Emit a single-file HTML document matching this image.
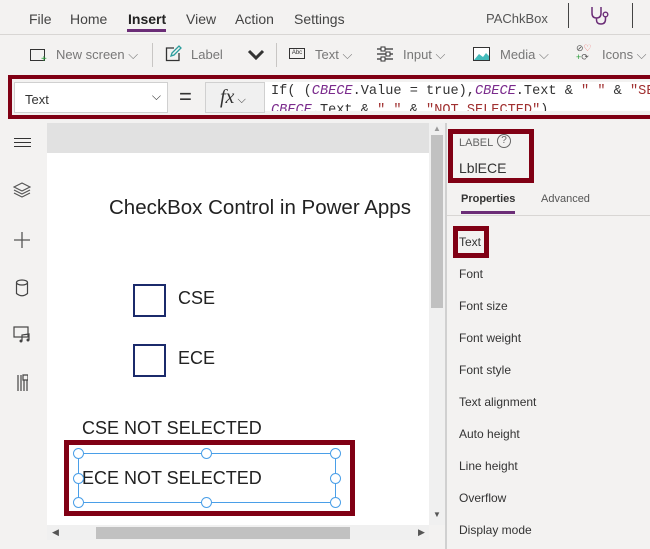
<!DOCTYPE html>
<html><head><meta charset="utf-8"><style>
*{margin:0;padding:0;box-sizing:border-box}
body{width:650px;height:549px;overflow:hidden;background:#f3f2f1;font-family:"Liberation Sans",sans-serif;position:relative;color:#333}
.a{position:absolute;white-space:nowrap}
.m{font-size:14px;color:#444;top:11px}
.t{font-size:13px;color:#777;top:47px}
.sep{position:absolute;width:1px;background:#c8c6c4}
.p{position:absolute;left:459px;font-size:12px;color:#333}
.cb{position:absolute;width:33px;height:33px;border:2px solid #1b2a6b;background:#fff}
.h{position:absolute;width:11px;height:11px;border:1.5px solid #4a9fe8;border-radius:50%;background:#fff}
svg{position:absolute}
</style></head><body>
<!-- menu -->
<div class="a m" style="left:29px">File</div>
<div class="a m" style="left:70px">Home</div>
<div class="a m" style="left:128px;font-weight:bold;color:#222">Insert</div>
<div style="position:absolute;left:127px;top:29px;width:39px;height:3px;background:#6b2d77"></div>
<div class="a m" style="left:186px">View</div>
<div class="a m" style="left:235px">Action</div>
<div class="a m" style="left:294px">Settings</div>
<div class="a m" style="left:486px;font-size:13px;color:#555">PAChkBox</div>
<div class="sep" style="left:568px;top:3px;height:25px;background:#444"></div>
<svg style="left:589px;top:6px" width="22" height="19" viewBox="0 0 22 19"><path d="M3 1 V7 Q3 12 7.5 12 Q12 12 12 7 V1 M7.5 12 V14 Q7.5 18 12 18 Q16.5 18 16.5 13 V11" fill="none" stroke="#6b2d77" stroke-width="1.5"/><circle cx="16.5" cy="8.5" r="2.3" fill="none" stroke="#6b2d77" stroke-width="1.4"/></svg>
<div class="sep" style="left:632px;top:3px;height:25px;background:#444"></div>
<div style="position:absolute;left:0;top:34px;width:650px;height:1px;background:#d8d6d4"></div>
<!-- toolbar -->
<div class="a" style="left:30px;top:49px;width:15px;height:12px;border:1.3px solid #333"></div>
<div class="a" style="left:41px;top:54px;font-size:10px;color:#2a9d3a">+</div>
<div class="a t" style="left:56px">New screen ⌵</div>
<div class="sep" style="left:152px;top:43px;height:24px"></div>
<svg style="left:165px;top:45px" width="17" height="17" viewBox="0 0 17 17"><path d="M9 3 H1.5 V15.5 H14 V8" fill="none" stroke="#333" stroke-width="1.3"/><path d="M6 11 L7 8 L14 1 L16 3 L9 10 Z" fill="none" stroke="#2a9d9d" stroke-width="1.3"/></svg>
<div class="a t" style="left:191px">Label</div>
<svg style="left:247px;top:49px" width="18" height="11" viewBox="0 0 18 11"><path d="M2 2 L9 9 L16 2" fill="none" stroke="#333" stroke-width="3"/></svg>
<div class="sep" style="left:276px;top:43px;height:24px"></div>
<div class="a" style="left:289px;top:48px;width:16px;height:11px;border:1px solid #333;font-size:6px;line-height:9px;text-align:center">Abc</div>
<div class="a t" style="left:315px">Text ⌵</div>
<svg style="left:376px;top:45px" width="18" height="17" viewBox="0 0 18 17"><path d="M1 4 H17 M1 9 H17 M1 14 H17" stroke="#333" stroke-width="1.2"/><rect x="5" y="2" width="4" height="4" fill="#fff" stroke="#333"/><rect x="10" y="7" width="4" height="4" fill="#fff" stroke="#333"/><rect x="5" y="12" width="4" height="4" fill="#fff" stroke="#333"/></svg>
<div class="a t" style="left:403px">Input ⌵</div>
<svg style="left:473px;top:47px" width="17" height="14" viewBox="0 0 17 14"><rect x="0.5" y="0.5" width="16" height="13" fill="#fff" stroke="#333"/><path d="M1 13 L6 7 L10 10 L13 6 L16 9 V13 Z" fill="#4bb"/></svg>
<div class="a t" style="left:500px">Media ⌵</div>
<div class="a" style="left:576px;top:44px;font-size:9px;line-height:9px;color:#555">⊘<span style="color:#e55">♡</span><br><span style="color:#2a9d3a">+</span>⟳</div>
<div class="a t" style="left:602px">Icons ⌵</div>
<!-- formula bar -->
<div class="a" style="left:8px;top:75px;width:650px;height:44px;border:4px solid #800014;border-right:none;background:#f3f2f1"></div>
<div class="a" style="left:14px;top:82px;width:154px;height:31px;background:#fff;border:1px solid #d0d0d0;font-size:13px;color:#333;padding:9px 0 0 10px">Text<span style="position:absolute;right:6px;top:6px;font-size:12px">⌵</span></div>
<div class="a" style="left:179px;top:84px;font-size:22px;color:#333">=</div>
<div class="a" style="left:205px;top:82px;width:60px;height:31px;background:#f0f0f0;border:1px solid #d0d0d0;font-family:'Liberation Serif',serif;font-style:italic;font-size:20px;padding:3px 0 0 14px">fx<span style="font-style:normal;font-family:'Liberation Sans';font-size:11px"> ⌵</span></div>
<div class="a" style="left:265px;top:82px;width:385px;height:29px;background:#fff;overflow:hidden;font-family:'Liberation Mono',monospace;font-size:13.6px;line-height:19px;padding:0 0 0 6px;color:#333">If( (<i style="color:#7a2a8c">CBECE</i>.Value = true),<i style="color:#7a2a8c">CBECE</i>.Text &amp; <span style="color:#a03030">" "</span> &amp; <span style="color:#a03030">"SELECTED"</span>,<br><i style="color:#7a2a8c">CBECE</i>.Text &amp; <span style="color:#a03030">" "</span> &amp; <span style="color:#a03030">"NOT SELECTED"</span>)</div>
<!-- left rail -->
<div class="a" style="left:0;top:119px;width:46px;height:430px;background:#f3f2f1"></div>
<div class="a" style="left:14px;top:138px;width:17px;height:1.3px;background:#333;box-shadow:0 4px 0 #333,0 8px 0 #333"></div>
<svg style="left:13px;top:182px" width="18" height="16" viewBox="0 0 18 16"><path d="M9 1 L17 5 L9 9 L1 5 Z M1 8 L9 12 L17 8 M1 11 L9 15 L17 11" fill="none" stroke="#555" stroke-width="1.2"/></svg>
<svg style="left:13px;top:231px" width="18" height="18" viewBox="0 0 18 18"><path d="M9 1 V17 M1 9 H17" stroke="#555" stroke-width="1.3"/></svg>
<svg style="left:15px;top:279px" width="14" height="18" viewBox="0 0 14 18"><ellipse cx="7" cy="3.5" rx="5.5" ry="2.5" fill="none" stroke="#444" stroke-width="1.2"/><path d="M1.5 3.5 V14.5 Q7 19 12.5 14.5 V3.5" fill="none" stroke="#444" stroke-width="1.2"/></svg>
<svg style="left:13px;top:326px" width="18" height="17" viewBox="0 0 18 17"><rect x="1" y="1" width="14" height="10" fill="none" stroke="#444" stroke-width="1.2"/><path d="M9 15 V9 L16 8 V14" fill="none" stroke="#444" stroke-width="1.2"/><circle cx="8" cy="15" r="1.5" fill="#444"/><circle cx="15" cy="14" r="1.5" fill="#444"/></svg>
<svg style="left:16px;top:374px" width="12" height="18" viewBox="0 0 12 18"><path d="M2 1 V17 M5 1 V17 M8 6 V17 M11 6 V17 M7 1 H12 V6 H7 Z" fill="none" stroke="#444" stroke-width="1.2"/></svg>
<!-- canvas -->
<div class="a" style="left:47px;top:123px;width:382px;height:30px;background:#e1e1e1"></div>
<div class="a" style="left:47px;top:153px;width:382px;height:372px;background:#fff"></div>
<div class="a" style="left:109px;top:196px;font-size:20.5px;color:#222">CheckBox Control in Power Apps</div>
<div class="cb" style="left:133px;top:284px"></div>
<div class="a" style="left:178px;top:288px;font-size:18px;color:#222">CSE</div>
<div class="cb" style="left:133px;top:344px"></div>
<div class="a" style="left:178px;top:348px;font-size:18px;color:#222">ECE</div>
<div class="a" style="left:82px;top:418px;font-size:18px;color:#222">CSE NOT SELECTED</div>
<div class="a" style="left:64px;top:440px;width:291px;height:76px;border:5px solid #800014"></div>
<div class="a" style="left:78px;top:453px;width:258px;height:50px;border:1.3px solid #4a9fe8"></div>
<div class="a" style="left:82px;top:468px;font-size:18px;color:#222">ECE NOT SELECTED</div>
<div class="h" style="left:73px;top:448px"></div><div class="h" style="left:201px;top:448px"></div><div class="h" style="left:330px;top:448px"></div>
<div class="h" style="left:73px;top:473px"></div><div class="h" style="left:330px;top:473px"></div>
<div class="h" style="left:73px;top:497px"></div><div class="h" style="left:201px;top:497px"></div><div class="h" style="left:330px;top:497px"></div>
<!-- scrollbars -->
<div class="a" style="left:429px;top:123px;width:16px;height:402px;background:#f0f0f0"></div>
<div class="a" style="left:431px;top:135px;width:12px;height:173px;background:#c1c1c1"></div>
<div class="a" style="left:433px;top:124px;font-size:8px;color:#999">▲</div>
<div class="a" style="left:433px;top:510px;font-size:8px;color:#555">▼</div>
<div class="a" style="left:47px;top:525px;width:382px;height:15px;background:#f0f0f0"></div>
<div class="a" style="left:96px;top:527px;width:254px;height:12px;background:#c1c1c1"></div>
<div class="a" style="left:52px;top:527px;font-size:9px;color:#555">◀</div>
<div class="a" style="left:418px;top:527px;font-size:9px;color:#555">▶</div>
<div class="a" style="left:445px;top:123px;width:2px;height:426px;background:#d0d0d0"></div>
<!-- right panel -->
<div class="a" style="left:448px;top:129px;width:86px;height:54px;border:5px solid #800014"></div>
<div class="a" style="left:459px;top:137px;font-size:11px;color:#666">LABEL</div>
<div class="a" style="left:497px;top:134px;width:14px;height:14px;border:1px solid #666;border-radius:50%;font-size:10px;text-align:center;line-height:12px;color:#666">?</div>
<div class="a" style="left:459px;top:160px;font-size:14px;color:#333">LblECE</div>
<div class="a" style="left:461px;top:193px;font-size:11px;font-weight:bold;color:#333">Properties</div>
<div class="a" style="left:461px;top:211px;width:54px;height:3px;background:#6b2d77"></div>
<div class="a" style="left:541px;top:193px;font-size:11px;color:#555">Advanced</div>
<div class="a" style="left:447px;top:215px;width:203px;height:1px;background:#d8d6d4"></div>
<div class="a" style="left:453px;top:226px;width:36px;height:32px;border:5px solid #800014"></div>
<div class="p" style="top:235px">Text</div>
<div class="p" style="top:267px">Font</div>
<div class="p" style="top:299px">Font size</div>
<div class="p" style="top:331px">Font weight</div>
<div class="p" style="top:363px">Font style</div>
<div class="p" style="top:395px">Text alignment</div>
<div class="p" style="top:427px">Auto height</div>
<div class="p" style="top:459px">Line height</div>
<div class="p" style="top:491px">Overflow</div>
<div class="p" style="top:523px">Display mode</div>
</body></html>
